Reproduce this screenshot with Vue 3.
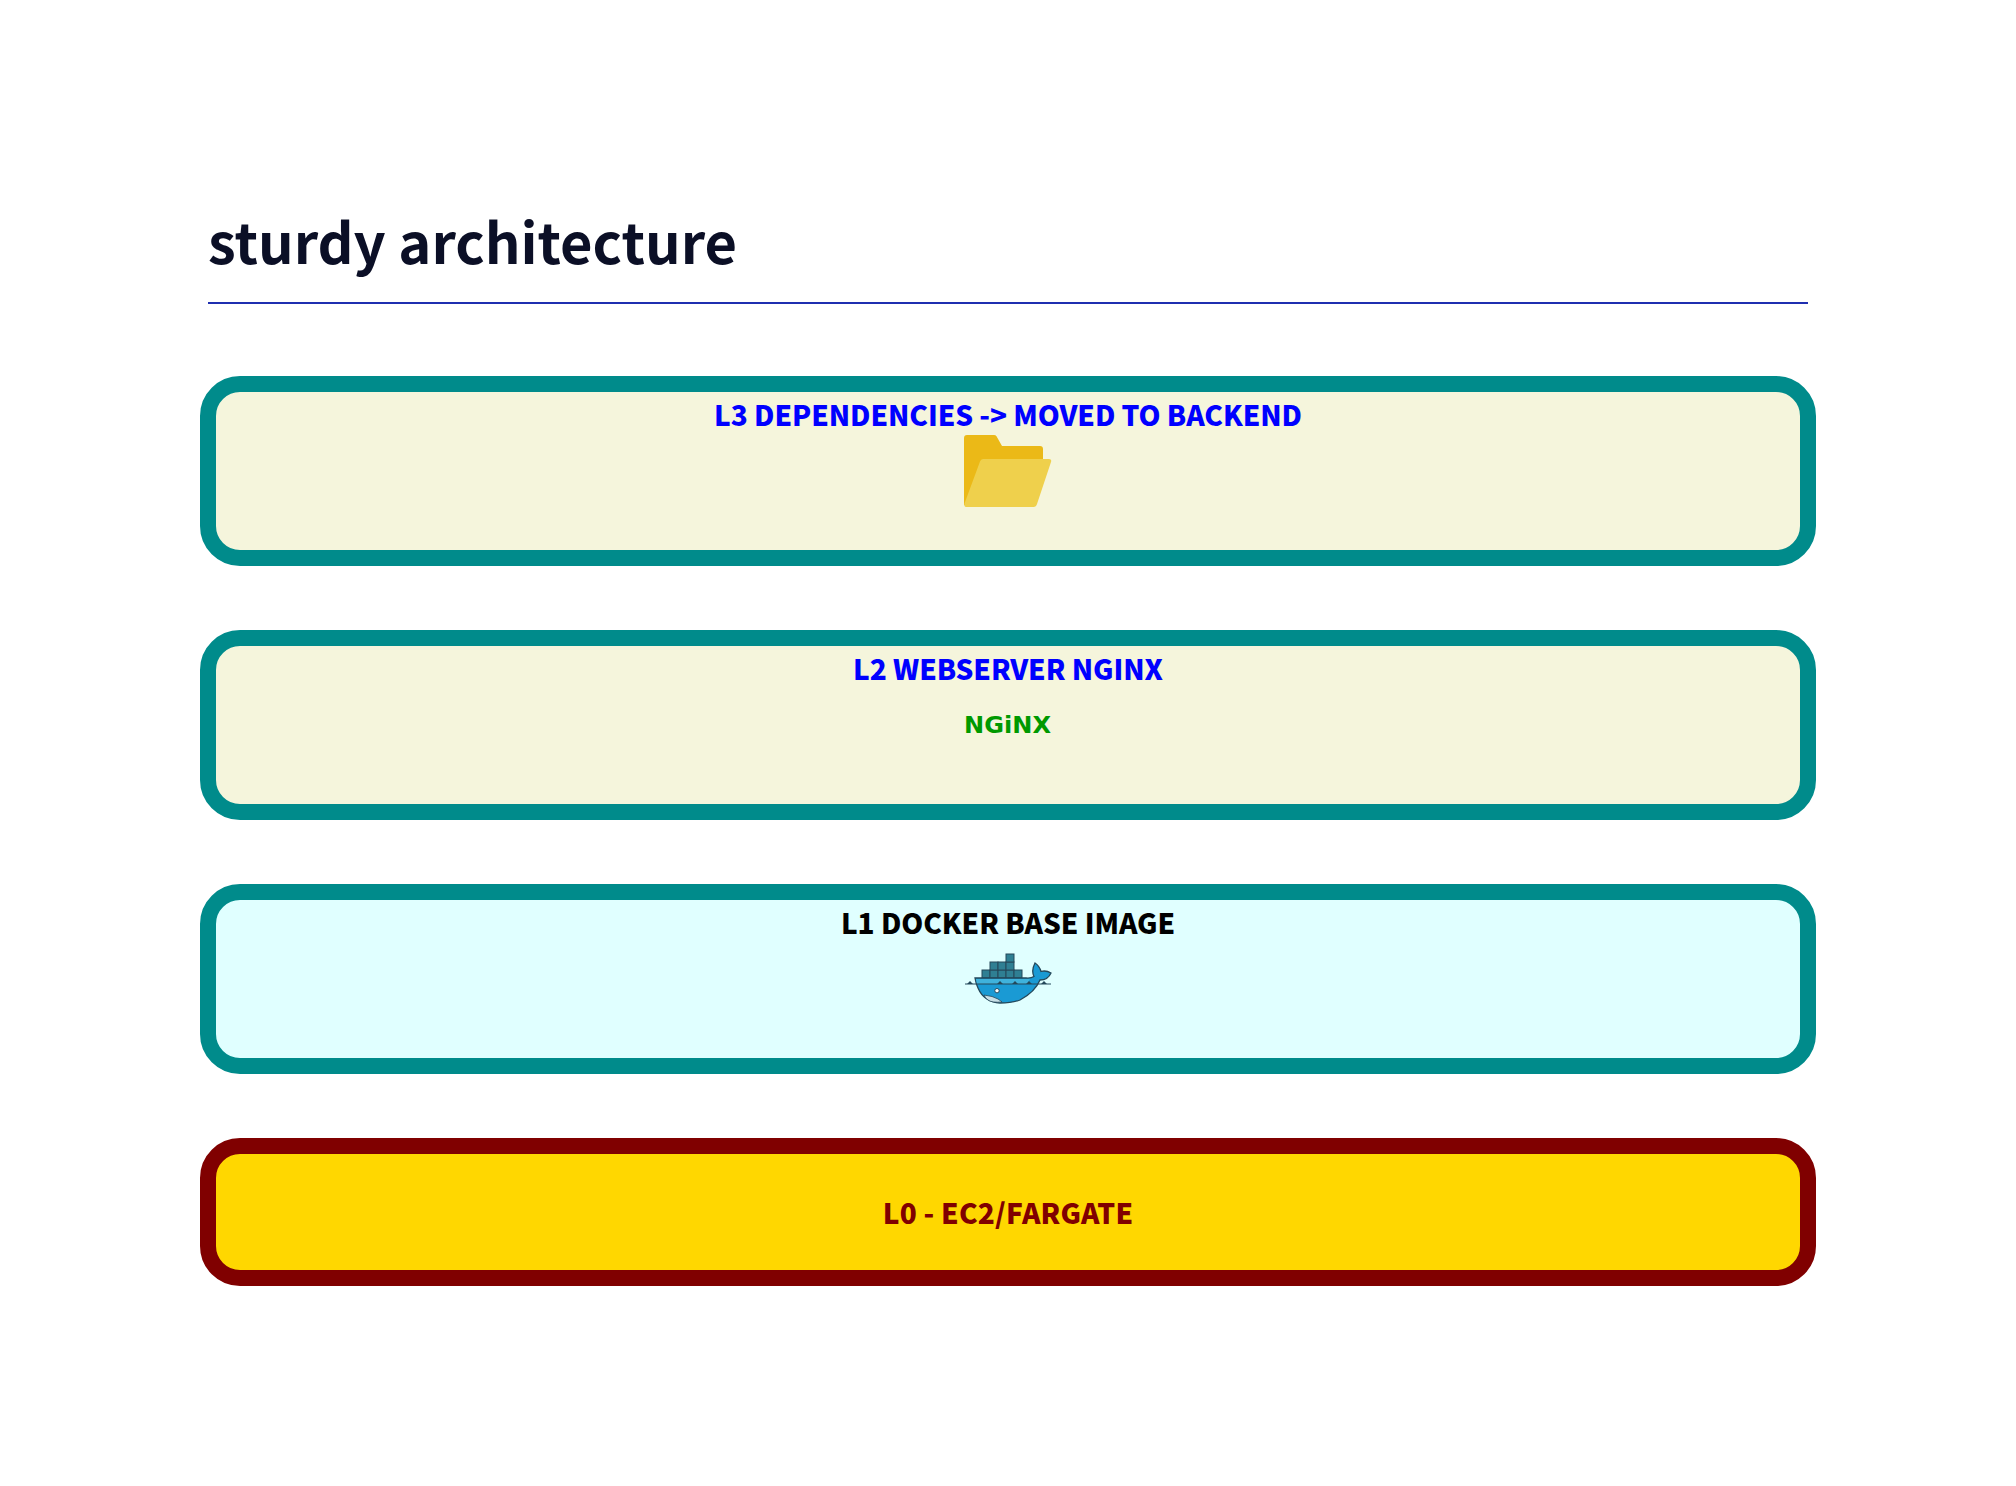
<script setup>
</script>

<template>
  <main class="page">
    <h1 class="title">sturdy architecture</h1>
    <section class="stack">
      <div class="layer beige blue">
        <h2>L3 DEPENDENCIES -&gt; MOVED TO BACKEND</h2>
        <svg class="icon" viewBox="0 0 88 88" width="88" height="88" aria-label="folder">
          <path d="M3 8h27q1.600 0 2.500 1.200L38 19h38q3 0 3 3v14H20L3 78H0V11q0-3 3-3z" fill="#ebb917"/>
          <path d="M19 32h66q3 0 2 3L73 77q-.8 3-3.500 3H3q-3.500 0-2.500-3.500L16 34.500q.8-2.500 3-2.500z" fill="#efd04c"/>
        </svg>
      </div>
      <div class="layer beige blue">
        <h2>L2 WEBSERVER NGINX</h2>
        <svg class="icon" viewBox="0 0 88 88" width="88" height="88" aria-label="nginx">
          <text x="0" y="52" textLength="87" lengthAdjust="spacingAndGlyphs" class="nginx">NGiNX</text>
        </svg>
      </div>
      <div class="layer cyan black">
        <h2>L1 DOCKER BASE IMAGE</h2>
        <svg class="icon" viewBox="0 0 88 88" width="88" height="88" aria-label="docker">
          <g fill="#2f7f93" stroke="#24485a" stroke-width="1">
            <rect x="18" y="35" width="8" height="8"/>
            <rect x="26" y="35" width="8" height="8"/>
            <rect x="34" y="35" width="8" height="8"/>
            <rect x="42" y="35" width="8" height="8"/>
            <rect x="50" y="35" width="8" height="8"/>
            <rect x="26" y="27" width="8" height="8"/>
            <rect x="34" y="27" width="8" height="8"/>
            <rect x="42" y="27" width="8" height="8"/>
            <rect x="42" y="19" width="8" height="8"/>
          </g>
          <path d="M11 43H62q5 .5 8-1.500q-3-6 1-13.500q4.500 3 6 8.500q5-1.500 10 1.500q-3 7-11 7q-5 12-20 20q-8 3-20 3q-16-1-22-15q-2-4-3-10z" fill="#1a9ad4" stroke="#24485a" stroke-width="1.300"/>
          <path d="M12 44H66L63 49H13z" fill="#3fb2dc"/>
          <path d="M20 60q9 1 14 4q3 2 4 3q-10 1-14-2q-3-2-4-5z" fill="#c7dfe6" stroke="#24485a" stroke-width=".8"/>
          <circle cx="33" cy="55.700" r="2.200" fill="#fff" stroke="#24485a" stroke-width="1"/>
          <path d="M1 49h86" stroke="#24485a" stroke-width="1"/>
          <path d="M3 49l3-3 3 3zM33 49l3-3 3 3zM48 49l3-3 3 3zM62 49l3-3 3 3zM77 49l3-3 3 3z" fill="#24485a"/>
        </svg>
      </div>
      <div class="layer gold maroon short">
        <h2>L0 - EC2/FARGATE</h2>
      </div>
    </section>
  </main>
</template>

<style scoped>
.page {
  box-sizing: border-box;
  width: 1600px;
  margin: 0 auto;
  padding-top: 196px;
  font-family: "Noto Sans CJK SC", "Noto Sans", sans-serif;
}
.title {
  margin: 0;
  height: 106px;
  border-bottom: 2px solid #1f2fb0;
  font-size: 56px;
  line-height: 88px;
  font-weight: 700;
  color: #0b0f26;
}
.stack {
  display: flex;
  flex-direction: column;
  gap: 64px;
  margin: 72px -8px 0;
}
.layer {
  box-sizing: border-box;
  height: 190px;
  border: 16px solid #008b8b;
  border-radius: 40px;
  text-align: center;
}
.layer h2 {
  margin: 0;
  padding-top: 9px;
  font-size: 28px;
  line-height: 26px;
  font-weight: 900;
  letter-spacing: -0.07px;
}
.icon {
  display: block;
  margin: 0 auto;
}
.nginx {
  font-family: "DejaVu Sans", sans-serif;
  font-size: 23px;
  font-weight: 700;
  fill: #009900;
}
.beige { background: #f5f5dc; }
.cyan { background: #e0ffff; }
.gold { background: #ffd700; border-color: #800000; }
.blue { color: #0000ff; }
.black { color: #000; }
.maroon { color: #800000; }
.short {
  height: 148px;
  display: flex;
  align-items: center;
  justify-content: center;
}
.short h2 { padding-top: 0; letter-spacing: 0.2px; }
</style>
